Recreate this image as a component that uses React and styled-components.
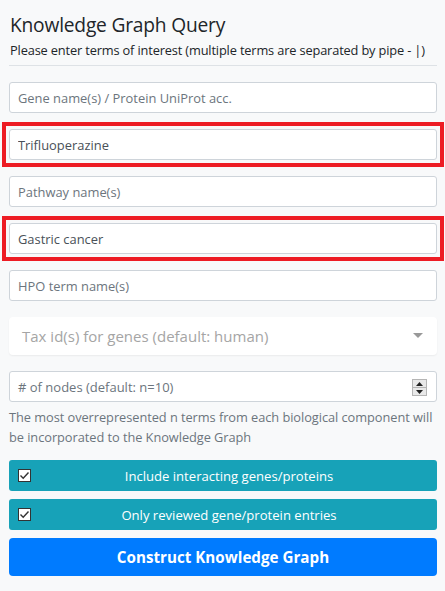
import React from "react";
import styled, { createGlobalStyle } from "styled-components";

const Global = createGlobalStyle`
  html, body { margin: 0; padding: 0; background: #f8f9fa; }
  body { font-family: "Open Sans", "Noto Sans", sans-serif; color: #212529; }
  * { box-sizing: border-box; }
`;

const Page = styled.div`
  padding: 10px 8px 12px 9px;
  display: flex;
  flex-direction: column;
`;

const Title = styled.h4`
  margin: 0 0 0 1px;
  font-size: 19.2px;
  font-weight: 400;
  line-height: 30px;
  letter-spacing: -0.2px;
  color: #212529;
`;

const Subtitle = styled.p`
  margin: 0 0 0 1px;
  font-size: 12.8px;
  line-height: 20px;
  color: #212529;
  letter-spacing: -0.15px;
`;

const Divider = styled.hr`
  margin: 5px 0 16px 0;
  border: 0;
  border-top: 1px solid #dee2e6;
`;

const Field = styled.div`
  display: flex;
  margin: ${(p) => (p.$highlight ? "-7px -7px 9px -7px" : "0 0 16px 0")};
  padding: ${(p) => (p.$highlight ? "3px" : "0")};
  border: ${(p) => (p.$highlight ? "4px solid #ed1c24" : "0")};
`;

const Input = styled.input`
  width: 100%;
  height: 31px;
  padding: 4px 8px;
  font-family: inherit;
  font-size: 12.9px;
  color: #495057;
  background: #fff;
  border: 1px solid #ced4da;
  border-radius: 3px;
  outline: none;
  &::placeholder { color: #6c757d; opacity: 1; }
`;

const NumberBox = styled.div`
  position: relative;
  width: 100%;
  height: 31px;
  display: flex;
  align-items: center;
  padding: 0 8px;
  background: #fff;
  border: 1px solid #ced4da;
  border-radius: 3px;
  font-size: 13px;
  color: #6c757d;
`;

const Spinner = styled.div`
  position: absolute;
  right: 9px;
  top: 7px;
  width: 15px;
  height: 17px;
  display: flex;
  flex-direction: column;
  border: 1px solid #b5b5b5;
  background: #e9e9e9;
`;

const SpinHalf = styled.div`
  flex: 1;
  display: flex;
  align-items: center;
  justify-content: center;
  & + & { border-top: 1px solid #b5b5b5; }
`;

const Select = styled.div`
  height: 38px;
  display: flex;
  align-items: center;
  justify-content: space-between;
  padding: 0 14px 0 13px;
  background: #fff;
  border-radius: 4px;
  box-shadow: 0 1px 2px rgba(0, 0, 0, 0.06);
  font-size: 15px;
  color: #a5a5a5;
  margin-bottom: 16px;
`;

const Help = styled.p`
  margin: 5px 0 13px 0;
  font-size: 12.8px;
  line-height: 20px;
  color: #6c757d;
  letter-spacing: -0.05px;
`;

const ToggleButton = styled.label`
  position: relative;
  height: 31px;
  display: flex;
  align-items: center;
  justify-content: center;
  padding-left: 12px;
  background: #17a2b8;
  color: #fff;
  border-radius: 3px;
  font-size: 13.1px;
  margin-bottom: 8px;
`;

const Check = styled.span`
  position: absolute;
  left: 9px;
  top: 9px;
  width: 13px;
  height: 13px;
  background: #fff;
  border: 1px solid #333;
  display: flex;
  align-items: center;
  justify-content: center;
`;

const Primary = styled.button`
  height: 38px;
  border: 0;
  border-radius: 4px;
  background: #007bff;
  color: #fff;
  font-family: inherit;
  font-size: 15.2px;
  font-weight: 700;
  width: 100%;
`;

const Tick = () => (
  <svg width="11" height="11" viewBox="0 0 11 11">
    <path d="M1.5 5.5 L4.2 8.2 L9.5 2.5" fill="none" stroke="#333" strokeWidth="1.4" />
  </svg>
);

const Caret = () => (
  <svg width="10" height="6" viewBox="0 0 10 6">
    <path d="M0 0 H10 L5 5 Z" fill="#999" />
  </svg>
);

export default function App() {
  return (
    <>
      <Global />
      <Page>
        <Title>Knowledge Graph Query</Title>
        <Subtitle>Please enter terms of interest (multiple terms are separated by pipe - |)</Subtitle>
        <Divider />
        <Field>
          <Input placeholder="Gene name(s) / Protein UniProt acc." />
        </Field>
        <Field $highlight>
          <Input defaultValue="Trifluoperazine" />
        </Field>
        <Field>
          <Input placeholder="Pathway name(s)" />
        </Field>
        <Field $highlight>
          <Input defaultValue="Gastric cancer" />
        </Field>
        <Field>
          <Input placeholder="HPO term name(s)" />
        </Field>
        <Select>
          <span>Tax id(s) for genes (default: human)</span>
          <Caret />
        </Select>
        <NumberBox>
          # of nodes (default: n=10)
          <Spinner>
            <SpinHalf>
              <svg width="7" height="4" viewBox="0 0 7 4"><path d="M0 4 L3.5 0 L7 4 Z" fill="#222" /></svg>
            </SpinHalf>
            <SpinHalf>
              <svg width="7" height="4" viewBox="0 0 7 4"><path d="M0 0 L3.5 4 L7 0 Z" fill="#222" /></svg>
            </SpinHalf>
          </Spinner>
        </NumberBox>
        <Help>
          The most overrepresented n terms from each biological component will be incorporated to the Knowledge Graph
        </Help>
        <ToggleButton>
          <Check><Tick /></Check>
          Include interacting genes/proteins
        </ToggleButton>
        <ToggleButton>
          <Check><Tick /></Check>
          Only reviewed gene/protein entries
        </ToggleButton>
        <Primary>Construct Knowledge Graph</Primary>
      </Page>
    </>
  );
}
